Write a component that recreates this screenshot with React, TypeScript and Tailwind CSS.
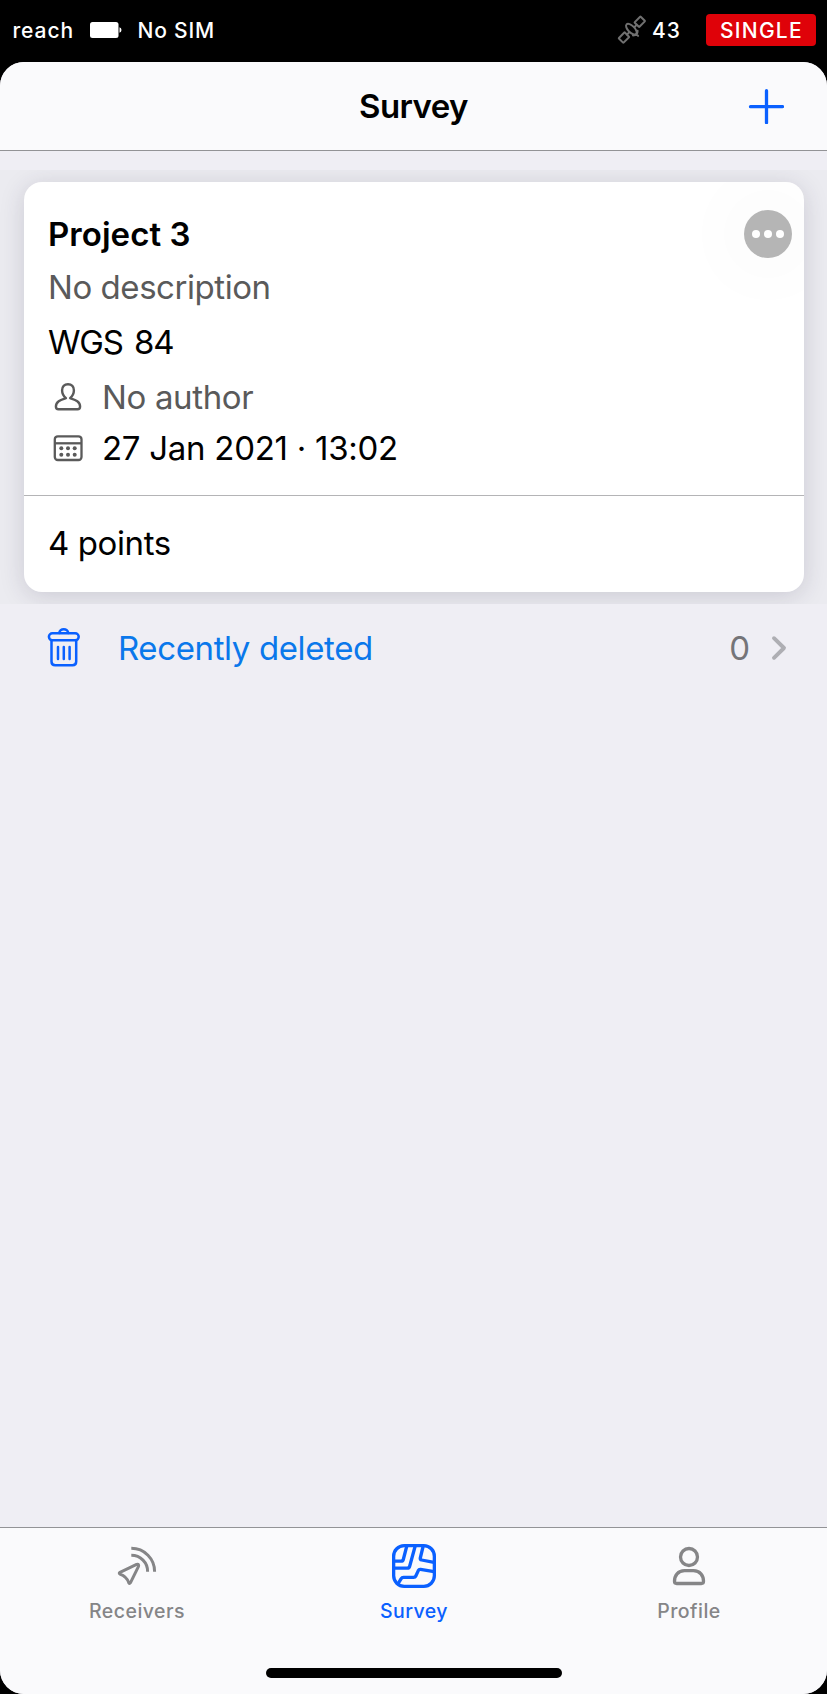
import type { ReactNode } from "react";

function SatelliteIcon() {
  return (
    <svg className="mt-px" width="30" height="30" viewBox="617 15 30 30" fill="none" stroke="#707070" strokeWidth="2" strokeLinejoin="round" strokeLinecap="round">
      <g transform="rotate(-45 631.8 29.6)">
        <rect x="616.4" y="26.4" width="8.400" height="6.600" rx="0.400" />
        <rect x="638.8" y="26.4" width="8.400" height="6.600" rx="0.400" />
        <ellipse cx="631.8" cy="29" rx="3.300" ry="6.800" />
        <path d="M625 29.700h3M635.600 29.700h3M628.500 34.500q3.300 3.500 6.600 0M631.800 36.500v2" />
      </g>
    </svg>
  );
}

function AuthorIcon() {
  return (
    <svg width="28" height="30" viewBox="54 381.500 28 30" fill="none" stroke="#5a5a5a" strokeWidth="2.400" strokeLinejoin="round">
      <path d="M65.9 397.6C63.500 395.600 62.100 392.800 62.100 389.800C62.100 386.300 64.300 383.700 68 383.700C71.700 383.700 73.900 386.300 73.900 389.800C73.900 392.800 72.500 395.600 70.100 397.600C74.500 399.200 80.100 400.600 80.100 406C80.100 407.900 79.200 408.700 77.500 408.700H58.500C56.800 408.700 55.900 407.900 55.900 406C55.900 400.600 61.500 399.200 65.900 397.600Z" />
    </svg>
  );
}

function CalendarIcon() {
  return (
    <svg width="30" height="28" viewBox="53 434 30 28" fill="none" stroke="#5a5a5a" strokeWidth="2.300">
      <rect x="54.8" y="436.300" width="26.700" height="23.700" rx="3" />
      <path d="M55 443.300h26.500" />
      <g fill="#5a5a5a" stroke="none">
        <circle cx="61.300" cy="448.300" r="2" />
        <circle cx="68" cy="448.300" r="2" />
        <circle cx="74.700" cy="448.300" r="2" />
        <circle cx="61.300" cy="454.700" r="2" />
        <circle cx="68" cy="454.700" r="2" />
        <circle cx="74.700" cy="454.700" r="2" />
      </g>
    </svg>
  );
}

function TrashIcon() {
  return (
    <svg className="-mt-0.5" width="34" height="40" viewBox="47 627 34 40" fill="none" stroke="#0a60ff" strokeWidth="2.500" strokeLinecap="round">
      <rect x="48.900" y="633.300" width="29.800" height="7" rx="3.500" />
      <path d="M59.300 633C59.300 627.900 68.200 627.900 68.200 633" />
      <path d="M51.500 640.500V661.500Q51.500 665.200 55.200 665.200H72.500Q76.200 665.200 76.200 661.500V640.500M58 647v12M63.800 647v12M69.600 647v12" />
    </svg>
  );
}

function ReceiversIcon() {
  return (
    <svg width="44" height="44" viewBox="115 1544 44 44" fill="none" stroke="#858587" strokeWidth="3" strokeLinejoin="round" strokeLinecap="butt">
      <path d="M120 1572.300L136.600 1564.400Q139.300 1563.600 138.500 1566.300L130.400 1582.800Q129.400 1584.400 128.700 1582.600Q126.800 1576.600 119.900 1574.100Q118.600 1573.200 120 1572.300Z" />
      <path d="M131.300 1555.300A16.300 16 0 0 1 147.600 1571.800M131.300 1548.300A23.300 23 0 0 1 154.600 1571.800" />
    </svg>
  );
}

function SurveyIcon() {
  return (
    <svg width="44" height="44" viewBox="0 0 44 44" fill="none" stroke="#0a60ff" strokeWidth="3.300" strokeLinejoin="round">
      <rect x="1.650" y="1.650" width="40.700" height="40.700" rx="10.500" />
      <path d="M14.800 2L11.300 15.500Q10.900 17.200 9 17.200H2" />
      <path d="M23.200 2L17.600 22.500Q17.100 24.200 15.200 24.200H2" />
      <path d="M31.200 2L28.300 14Q27.900 15.700 29.600 16L42 18.400" />
      <path d="M42 27.600L28.500 25.400Q27 25.200 26.300 26.600L23.800 32Q23.200 33.400 21.500 33.400H11.500Q9.900 33.400 9 34.800L6.200 39.500" />
    </svg>
  );
}

function ProfileIcon() {
  return (
    <svg width="44" height="44" viewBox="667 1544 44 44" fill="none" stroke="#858587" strokeWidth="3.300" strokeLinejoin="round">
      <circle cx="689" cy="1557" r="8.500" />
      <path d="M684.500 1570.700H693.500C700 1570.700 703.500 1575.500 703.500 1581.300Q703.500 1583.500 701.300 1583.500H676.700Q674.500 1583.500 674.500 1581.300C674.500 1575.500 678 1570.700 684.500 1570.700Z" />
    </svg>
  );
}

function StatusBar() {
  return (
    <div className="flex h-[62px] items-start justify-between pt-3.5 text-[21px] leading-8 font-medium text-white">
      <div className="flex items-start pl-[12.500px]">
        <span className="pt-px tracking-[0.9px]">reach</span>
        <svg className="mt-2 ml-[16.500px]" width="32" height="16" viewBox="0 0 32 16" fill="white">
          <rect width="28.500" height="16" rx="2.500" />
          <path d="M29.500 5.200a2.700 2.900 0 0 1 0 5.600z" />
        </svg>
        <span className="ml-[15px] pt-px tracking-[0.8px]">No SIM</span>
      </div>
      <div className="flex items-start pr-[11px]">
        <SatelliteIcon />
        <span className="ml-[5px] w-[54px] pt-px tracking-[1px]">43</span>
        <span className="h-8 w-[110px] rounded bg-[#df0209] pt-px pl-3.5 tracking-[1.250px]">SINGLE</span>
      </div>
    </div>
  );
}

function Header() {
  return (
    <header className="grid h-[89px] grid-cols-3 items-center border-b border-[#939396] bg-[#fafafc]">
      <h1 className="col-start-2 pt-0.5 text-center text-[33px] font-semibold tracking-[-0.600px]">Survey</h1>
      <button className="mr-[43px] justify-self-end" aria-label="Add project">
        <svg width="36" height="36" viewBox="0 0 36 36" stroke="#0a60ff" strokeWidth="3.300" strokeLinecap="round">
          <path d="M18.500 2.700v32M2.500 18.700h32" />
        </svg>
      </button>
    </header>
  );
}

function ProjectCard() {
  return (
    <section className="overflow-hidden bg-[#ebebf0] pt-3 pr-[23px] pb-3 pl-6">
      <article className="overflow-hidden rounded-[18px] bg-white text-[33px] shadow-[0_4px_24px_rgba(50,40,70,0.17)]">
        <div className="border-b border-[#b4b4b6] pt-[26px] pb-[23px] pl-6">
          <div className="flex h-[52px] items-center justify-between pr-3">
            <h2 className="pt-0.5 font-semibold tracking-[0.050px]">Project 3</h2>
            <button className="flex size-12 items-center justify-center gap-1 rounded-full bg-[#b5b5b5] shadow-[0_0_70px_20px_rgba(0,0,0,0.025)]" aria-label="Project options">
              <span className="size-2 rounded-full bg-white" />
              <span className="size-2 rounded-full bg-white" />
              <span className="size-2 rounded-full bg-white" />
            </button>
          </div>
          <p className="h-[54px] leading-[54px] tracking-[-0.450px] text-[#5a5a5a]">No description</p>
          <p className="h-14 leading-14 tracking-[-1.150px] [word-spacing:3px]">WGS 84</p>
          <div className="flex h-[54px] items-center pl-1.5 text-[#5a5a5a]">
            <AuthorIcon />
            <span className="ml-5 pt-0.5 tracking-[-0.350px]">No author</span>
          </div>
          <div className="flex h-12 items-center pl-[5px]">
            <CalendarIcon />
            <span className="ml-[19px] pt-0.5 tracking-[-0.270px]">27 Jan 2021 · 13:02</span>
          </div>
        </div>
        <p className="h-24 pl-6 leading-[94px] tracking-[-0.400px]">4 points</p>
      </article>
    </section>
  );
}

function DeletedRow() {
  return (
    <div className="flex h-[88px] items-center pl-[47px] text-[33px]">
      <TrashIcon />
      <span className="ml-[37px] pt-0.5 tracking-[-0.380px] text-[#0a78eb]">Recently deleted</span>
      <span className="ml-auto pt-0.5 text-[#747478]">0</span>
      <svg className="mr-[39px] ml-[20px]" width="18" height="26" viewBox="0 0 18 26" fill="none" stroke="#aeaeb3" strokeWidth="3.900" strokeLinecap="round" strokeLinejoin="round">
        <path d="M4 3.200L14 13L4 22.800" />
      </svg>
    </div>
  );
}

function Tab({ icon, label, color }: { icon: ReactNode; label: string; color: string }) {
  return (
    <button className={`flex w-[110px] flex-col items-center pt-4 ${color}`}>
      {icon}
      <span className="mt-[9px] text-[19.500px] leading-7 font-medium tracking-[0.470px]">{label}</span>
    </button>
  );
}

export default function App() {
  return (
    <div className="flex h-[1694px] w-[827px] flex-col bg-black font-['Inter','Liberation_Sans',sans-serif] text-black">
      <StatusBar />
      <div className="flex flex-1 flex-col overflow-hidden rounded-3xl bg-[#efeef4]">
        <Header />
        <main className="flex-1 pt-[19px]">
          <ProjectCard />
          <DeletedRow />
        </main>
        <nav className="flex h-[167px] flex-col border-t border-[#939396] bg-[#fafafc]">
          <div className="grid flex-1 grid-cols-[110px_1fr_110px] justify-items-center pr-[83px] pl-[82px]">
            <Tab icon={<ReceiversIcon />} label="Receivers" color="text-[#858587]" />
            <div className="pl-0.5">
              <Tab icon={<SurveyIcon />} label="Survey" color="text-[#0a60ff]" />
            </div>
            <Tab icon={<ProfileIcon />} label="Profile" color="text-[#858587]" />
          </div>
          <div className="mb-4 h-2.5 w-[296px] self-center rounded-full bg-black" />
        </nav>
      </div>
    </div>
  );
}
